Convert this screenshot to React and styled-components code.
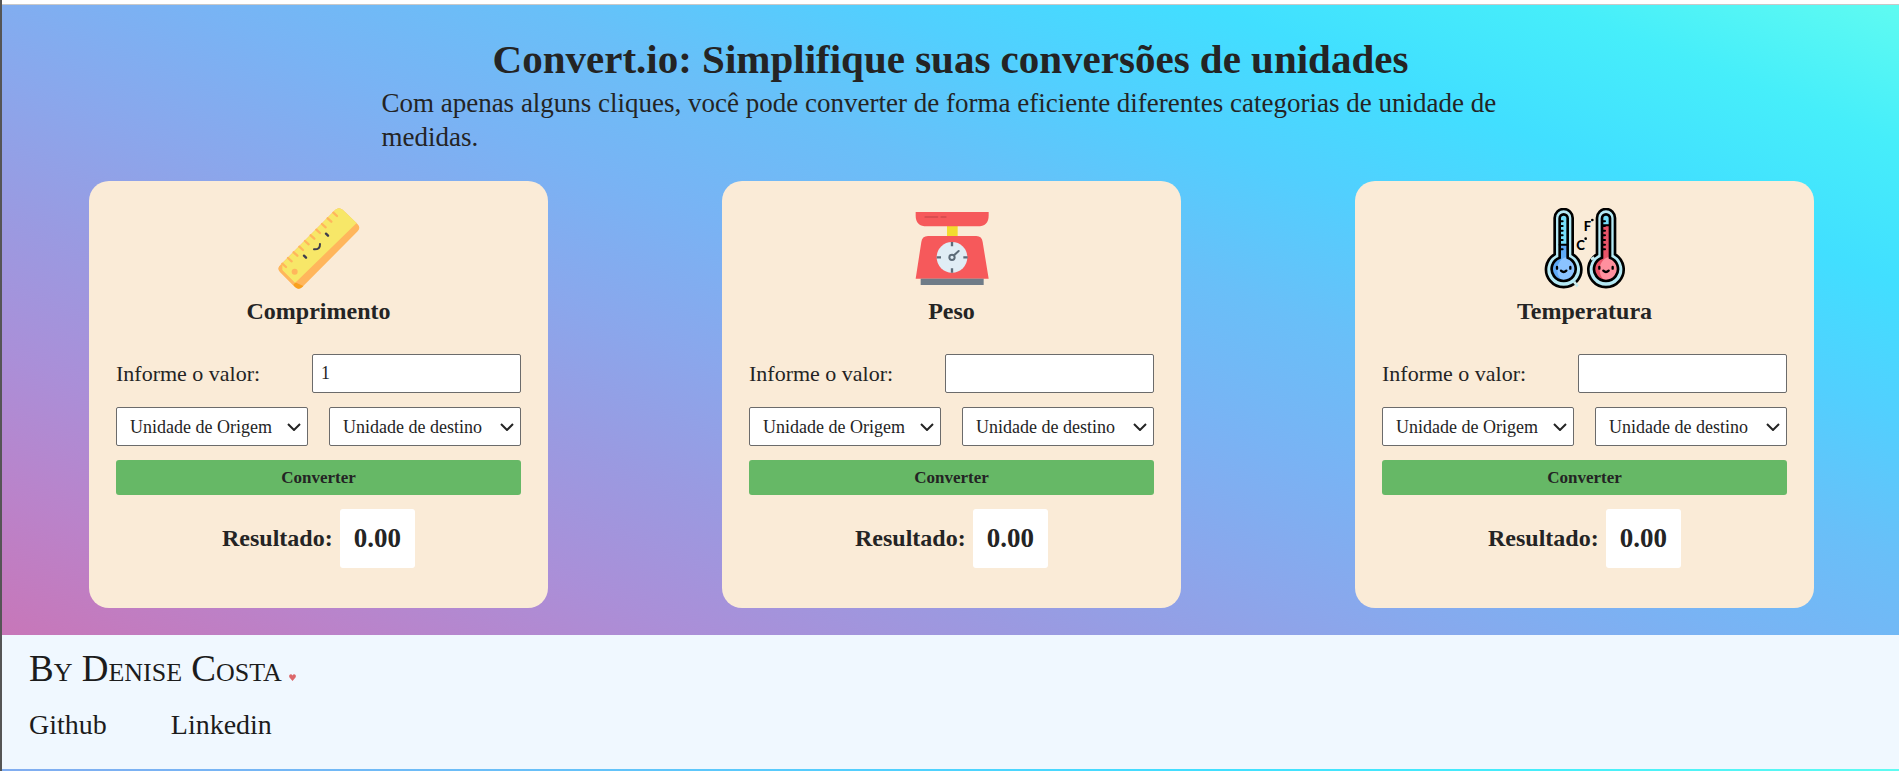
import React, { useId, useState } from 'react';
import styled, { createGlobalStyle } from 'styled-components';

const GlobalStyle = createGlobalStyle`
  *, *::before, *::after { box-sizing: border-box; }
  body {
    margin: 0;
    color: #242424;
    font-family: "Liberation Serif", "Times New Roman", serif;
  }
  h1, h2, p { margin: 0; }
`;

const Frame = styled.div`
  border-left: 2px solid #555555;
`;

const TopEdge = styled.div`
  height: 5px;
  background: #ffffff;
  border-bottom: 1px solid #c8c8c8;
`;

/* The gradient is sized to the content box and starts over below the footer. */
const Page = styled.div`
  padding-bottom: 2px;
  background-image: linear-gradient(
    to right top,
    #d16ba5, #c777b9, #ba83ca, #aa8fd8, #9a9ae1, #8aa7ec,
    #79b3f4, #69bff8, #52cffe, #41dfff, #46eefa, #5ffbf1
  );
  background-origin: content-box;
`;

const Header = styled.header`
  display: flex;
  flex-direction: column;
  align-items: center;
  padding: 27px 0;
`;

const Title = styled.h1`
  font-size: 41px;
  line-height: 54px;
  font-weight: 700;
`;

const Intro = styled.p`
  width: 60%;
  font-size: 27px;
  line-height: 34px;
`;

const Cards = styled.main`
  display: flex;
  flex-wrap: wrap;
  justify-content: space-between;
  row-gap: 27px;
  padding: 0 85px 27px 87px;
`;

const Card = styled.section`
  display: flex;
  flex-direction: column;
  width: 459px;
  max-width: 100%;
  padding: 27px;
  border-radius: 20px;
  background: #faebd7;
`;

const Icon = styled.svg`
  display: block;
  align-self: center;
  width: 82px;
  height: 82px;
`;

const CardTitle = styled.h2`
  margin-bottom: 22px;
  font-size: 24px;
  line-height: 42px;
  font-weight: 700;
  text-align: center;
`;

const Form = styled.form`
  display: flex;
  flex-direction: column;
  gap: 14px;
  padding-bottom: 13px;
`;

const ValueRow = styled.div`
  display: flex;
  align-items: center;
  justify-content: space-between;
`;

const Label = styled.label`
  font-size: 22px;
`;

const ValueInput = styled.input`
  width: 209px;
  min-width: 0;
  height: 39px;
  padding: 0 8px;
  border: 1px solid #6b6b6b;
  border-radius: 2px;
  background: #ffffff;
  color: inherit;
  font: inherit;
  font-size: 18px;
`;

const UnitRow = styled.div`
  display: grid;
  grid-template-columns: 1fr 1fr;
  gap: 21px;
`;

const SelectBox = styled.div`
  display: grid;
  align-items: center;

  > * { grid-area: 1 / 1; }
`;

const UnitSelect = styled.select`
  appearance: none;
  width: 100%;
  min-width: 0;
  height: 39px;
  padding: 0 24px 0 13px;
  border: 1px solid #6b6b6b;
  border-radius: 2px;
  background-color: #ffffff;
  color: inherit;
  font: inherit;
  font-size: 18px;
`;

const Chevron = styled.svg`
  justify-self: end;
  width: 14px;
  height: 8px;
  margin-right: 7px;
  fill: none;
  stroke: #242424;
  stroke-width: 2;
  pointer-events: none;
`;

const ConvertButton = styled.button`
  height: 35px;
  border: 0;
  border-radius: 3px;
  background: #66b866;
  color: inherit;
  font: inherit;
  font-size: 17px;
  font-weight: 700;
  cursor: pointer;
`;

const ResultRow = styled.div`
  display: flex;
  align-items: center;
  justify-content: center;
  gap: 7px;
  font-size: 24px;
  font-weight: 700;
`;

const ResultValue = styled.output`
  padding: 14px;
  border-radius: 3px;
  background: #ffffff;
  font-size: 27px;
  line-height: 31px;
`;

const Footer = styled.footer`
  display: flex;
  flex-direction: column;
  gap: 15px;
  padding: 10px 27px 27px;
  background: #f0f8ff;
  color: #1c1c1c;
`;

const Author = styled.p`
  display: flex;
  align-items: baseline;
  gap: 7px;
  font-size: 37px;
  line-height: 48px;
  font-variant: small-caps;
`;

const Heart = styled.svg`
  width: 7px;
  height: 7px;
  fill: #dc686b;
`;

const Links = styled.nav`
  display: flex;
  gap: 64px;
`;

const FooterLink = styled.a`
  color: inherit;
  font-size: 28px;
  line-height: 34px;
  text-decoration: none;
`;

const RULER_TICKS = [0, 1, 2, 3, 4, 5, 6, 7, 8, 9];

function RulerIcon() {
  return (
    <Icon viewBox="53 39 246 246" aria-hidden="true">
      <path
        d="M60 210 L225 44 Q236 35 247 44 L292 88 Q302 98 292 109 L126 276 Q115 287 104 276 L60 232 Q49 221 60 210Z"
        fill="#ffb65c"
      />
      <path d="M104 262 L129 273 L126 276 Q115 287 104 276 L98 269Z" fill="#f9a01e" />
      <path d="M66 205 L225 44 Q236 35 247 44 L289 84 L104 264 L62 222 L60 211Z" fill="#f7e768" />
      <path d="M58 213 Q62 208 66 208 L66 226 L104 264 L98 270 L60 232 Q50 222 58 213Z" fill="#ffb65c" />
      <g stroke="#ffb65c" strokeWidth="7" strokeLinecap="round">
        {RULER_TICKS.map((n) => (
          <line key={n} x1={66 + n * 17} y1={206 - n * 17} x2={77 + n * 17} y2={216 - n * 17} />
        ))}
      </g>
      <circle cx="103" cy="230" r="9" fill="#ffb65c" />
      <g fill="none" stroke="#3e3d4d" strokeWidth="7" strokeLinecap="round">
        <path d="M197 116 L203 122 M131 182 L137 188" />
        <path d="M161 163 Q180 164 179 147" strokeWidth="6" />
      </g>
    </Icon>
  );
}

function ScaleIcon() {
  return (
    <Icon viewBox="46 39 246 246" aria-hidden="true">
      <rect x="154" y="92" width="32" height="33" fill="#f2dc2f" />
      <path d="M60 51 H279 V62 Q279 94 245 94 H94 Q60 94 60 62Z" fill="#f6595b" />
      <path d="M89 66 H125 M137 66 H150" stroke="#db4d50" strokeWidth="6" strokeLinecap="round" />
      <path d="M60 251 L77 141 Q79 123 97 123 H242 Q259 123 261 141 L279 251Z" fill="#f6595b" />
      <rect x="75" y="251" width="189" height="19" fill="#6f7c88" />
      <circle cx="169" cy="187" r="46" fill="#e0edf5" />
      <g fill="none" stroke="#5d6c79" strokeWidth="7">
        <path d="M169 141 V154 M169 220 V233 M123 187 H136 M203 187 H216" />
        <circle cx="169" cy="187" r="8" strokeWidth="6" />
        <path d="M175 181 L189 168" strokeLinecap="round" strokeWidth="6" />
      </g>
    </Icon>
  );
}

function Thermometer({ x, level, fill, light, gap }) {
  const clip = useId();
  const inner = 'M-12 188 V70 A12 12 0 0 1 12 70 V188 A36 36 0 1 1 -12 188Z';
  return (
    <g transform={`translate(${x} 0)`}>
      <clipPath id={clip}>
        <path d={inner} />
      </clipPath>
      <path
        d="M-27 178 V69 A27 27 0 0 1 27 69 V178 A53 53 0 1 1 -27 178Z"
        fill="#b4e9f5"
        stroke="#000000"
        strokeWidth="8"
      />
      <path d={gap} stroke="#c8ecee" strokeWidth="8" />
      <g clipPath={`url(#${clip})`}>
        <rect x="-40" y="50" width="80" height="220" fill="#76dffb" />
        <rect x="-40" y={level} width="80" height="200" fill={fill} />
        <ellipse cx="12" cy="224" rx="31" ry="38" fill={light} />
      </g>
      <path d={inner} fill="none" stroke="#000000" strokeWidth="8" />
      <path
        d={`M-12 ${level} H12 M-10 79 H-3 M-10 93 H-3 M-10 107 H-3 M-10 121 H-3 M-10 135 H-3 M-10 149 H-3 M-10 163 H-3`}
        stroke="#000000"
        strokeWidth="6"
        strokeLinecap="round"
      />
      <path
        d="M-20 216 V221 M20 216 V221 M-8 227 Q0 235 8 227"
        fill="none"
        stroke="#000000"
        strokeWidth="7"
        strokeLinecap="round"
      />
    </g>
  );
}

const ScaleLetter = styled.text`
  font-family: Lato, sans-serif;
  font-size: 39px;
  font-weight: 900;
`;

function ThermometersIcon() {
  return (
    <Icon viewBox="56 39 246 246" aria-hidden="true">
      <Thermometer x={115} level={149} fill="#5eaaf7" light="#8bc3ff" gap="M31 260 L42 274" />
      <Thermometer x={242} level={91} fill="#ea5468" light="#ff909e" gap="M-45 193 L-35 187" />
      <ScaleLetter x="175" y="107">F</ScaleLetter>
      <ScaleLetter x="153" y="164">C</ScaleLetter>
      <circle cx="201" cy="75" r="4" />
      <circle cx="181" cy="131" r="4" />
    </Icon>
  );
}

function UnitPicker({ label }) {
  return (
    <SelectBox>
      <UnitSelect aria-label={label}>
        <option>{label}</option>
      </UnitSelect>
      <Chevron viewBox="0 0 14 8" aria-hidden="true">
        <path d="M1 1 L7 7 L13 1" />
      </Chevron>
    </SelectBox>
  );
}

function ConverterCard({ icon, title, initialValue }) {
  const id = useId();
  const [value, setValue] = useState(initialValue);
  return (
    <Card>
      {icon}
      <CardTitle>{title}</CardTitle>
      <Form onSubmit={(event) => event.preventDefault()}>
        <ValueRow>
          <Label htmlFor={id}>Informe o valor:</Label>
          <ValueInput
            id={id}
            inputMode="decimal"
            value={value}
            onChange={(event) => setValue(event.target.value)}
          />
        </ValueRow>
        <UnitRow>
          <UnitPicker label="Unidade de Origem" />
          <UnitPicker label="Unidade de destino" />
        </UnitRow>
        <ConvertButton type="submit">Converter</ConvertButton>
        <ResultRow>
          <span>Resultado:</span>
          <ResultValue htmlFor={id}>0.00</ResultValue>
        </ResultRow>
      </Form>
    </Card>
  );
}

export default function App() {
  return (
    <Frame>
      <GlobalStyle />
      <TopEdge />
      <Page>
        <Header>
          <Title>Convert.io: Simplifique suas conversões de unidades</Title>
          <Intro>
            Com apenas alguns cliques, você pode converter de forma eficiente diferentes categorias
            de unidade de medidas.
          </Intro>
        </Header>
        <Cards>
          <ConverterCard icon={<RulerIcon />} title="Comprimento" initialValue="1" />
          <ConverterCard icon={<ScaleIcon />} title="Peso" initialValue="" />
          <ConverterCard icon={<ThermometersIcon />} title="Temperatura" initialValue="" />
        </Cards>
        <Footer>
          <Author>
            By Denise Costa
            <Heart viewBox="0 0 14 14" aria-hidden="true">
              <path d="M7 14 L1 7 Q-1 3 2 1 Q5 -1 7 3 Q9 -1 12 1 Q15 3 13 7Z" />
            </Heart>
          </Author>
          <Links>
            <FooterLink href="#github">Github</FooterLink>
            <FooterLink href="#linkedin">Linkedin</FooterLink>
          </Links>
        </Footer>
      </Page>
    </Frame>
  );
}
